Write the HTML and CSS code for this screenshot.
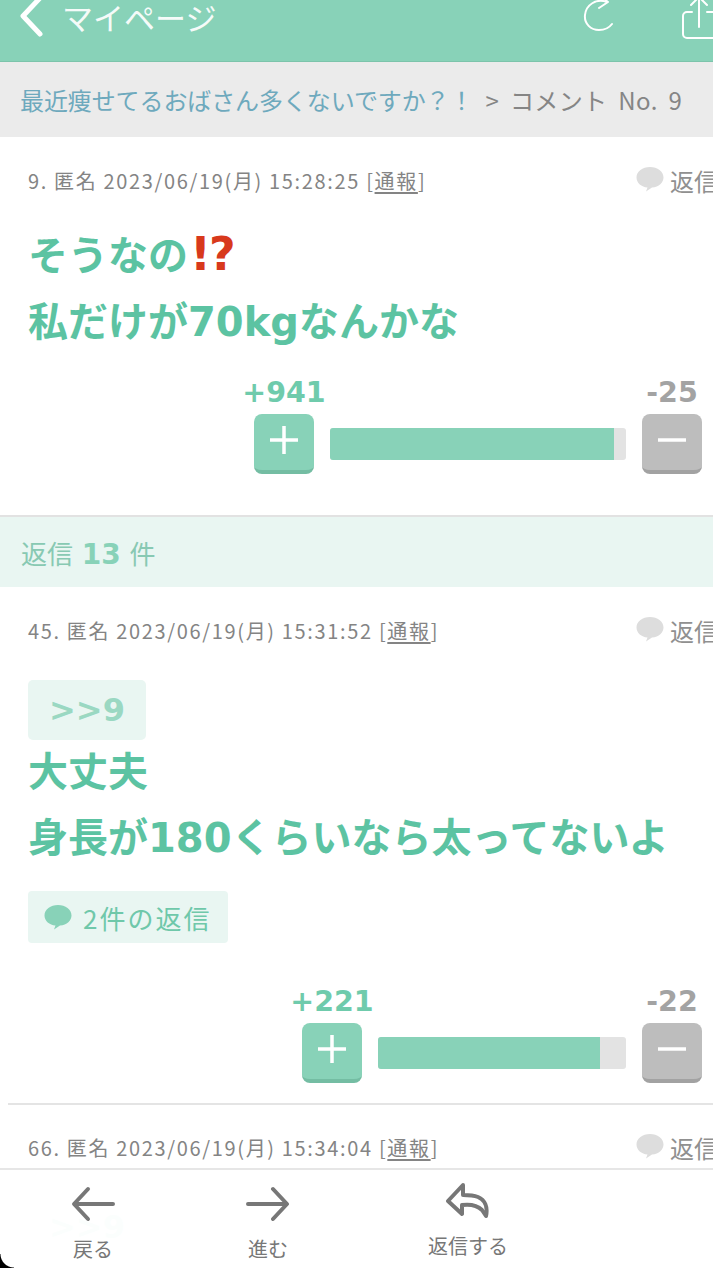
FILE: index.html
```html
<!DOCTYPE html>
<html lang="ja">
<head>
<meta charset="utf-8">
<title>コメント No. 9</title>
<link rel="stylesheet" href="styles.css">
</head>
<body>
<div class="page">
  <header class="topbar">
    <svg class="back" width="28" height="44" viewBox="0 0 28 44"><path d="M24 2 7 20l17 18" fill="none" stroke="#fff" stroke-width="5" stroke-linecap="round" stroke-linejoin="round"/></svg>
    <span class="top-title">マイページ</span>
    <svg class="reload" width="34" height="40" viewBox="0 0 34 40"><path d="M25 7C14 3 4 10 3 20c-1 9 6 15 14 15 5 0 10-2 13-6" fill="none" stroke="#fff" stroke-width="2" stroke-linecap="round"/><path d="M17 0l9 7-9 6" fill="none" stroke="#fff" stroke-width="2" stroke-linecap="round" stroke-linejoin="round"/></svg>
    <svg class="share" width="34" height="46" viewBox="0 0 34 46"><path d="M10 15H5a4 4 0 0 0-4 4v18a4 4 0 0 0 4 4h25a4 4 0 0 0 4-4V19a4 4 0 0 0-4-4h-5M17 30V1M9 8l8-8 8 8" fill="none" stroke="#fff" stroke-width="2" stroke-linecap="round" stroke-linejoin="round"/></svg>
  </header>
  <nav class="crumb"><span class="crumb-link">最近痩せてるおばさん多くないですか？！</span><span class="crumb-now">&gt; コメント No. 9</span></nav>

  <article class="comment first">
    <div class="meta">
      <span>9. 匿名 2023/06/19(月) 15:28:25 [<u>通報</u>]</span>
      <span class="reply-link"><svg class="bubble" width="28" height="26" viewBox="0 0 28 26"><path d="M14 1C6.500 1 .5 5.500.5 11.500c0 5.500 5 9.500 11 10L10 25.500l6-4C23 21 27.500 16.500 27.500 11.500 27.500 5.500 21.500 1 14 1Z" fill="#ddd"/></svg>返信</span>
    </div>
    <div class="body">
      <p>そうなの<span class="emoji">!?</span></p>
      <p>私だけが<span class="latin">70kg</span>なんかな</p>
    </div>
    <div class="vote">
      <div class="vote-col plus"><span class="count">+941</span><span class="btn"><svg width="32" height="32" viewBox="0 0 32 32"><path d="M16 2v28M2 16h28" stroke="#fff" stroke-width="3.500"/></svg></span></div>
      <div class="bar wide"><div class="fill" style="width:96%"></div></div>
      <div class="vote-col minus"><span class="count">-25</span><span class="btn"><svg width="32" height="32" viewBox="0 0 32 32"><path d="M2 16h28" stroke="#fff" stroke-width="3.500"/></svg></span></div>
    </div>
  </article>

  <div class="reply-head">返信 <b>13</b> 件</div>

  <article class="comment second">
    <div class="meta">
      <span>45. 匿名 2023/06/19(月) 15:31:52 [<u>通報</u>]</span>
      <span class="reply-link"><svg class="bubble" width="28" height="26" viewBox="0 0 28 26"><path d="M14 1C6.500 1 .5 5.500.5 11.500c0 5.500 5 9.500 11 10L10 25.500l6-4C23 21 27.500 16.500 27.500 11.500 27.500 5.500 21.500 1 14 1Z" fill="#ddd"/></svg>返信</span>
    </div>
    <div class="body">
      <span class="quote">&gt;&gt;9</span>
      <p>大丈夫</p>
      <p>身長が<span class="latin">180</span>くらいなら太ってないよ</p>
    </div>
    <div class="replies"><svg width="28" height="26" viewBox="0 0 28 26"><path d="M14 1C6.500 1 .5 5.500.5 11.500c0 5.500 5 9.500 11 10L10 25.500l6-4C23 21 27.500 16.500 27.500 11.500 27.500 5.500 21.500 1 14 1Z" fill="#88d2b8"/></svg>2件の返信</div>
    <div class="vote">
      <div class="vote-col plus"><span class="count">+221</span><span class="btn"><svg width="32" height="32" viewBox="0 0 32 32"><path d="M16 2v28M2 16h28" stroke="#fff" stroke-width="3.500"/></svg></span></div>
      <div class="bar narrow"><div class="fill" style="width:89.500%"></div></div>
      <div class="vote-col minus"><span class="count">-22</span><span class="btn"><svg width="32" height="32" viewBox="0 0 32 32"><path d="M2 16h28" stroke="#fff" stroke-width="3.500"/></svg></span></div>
    </div>
  </article>

  <article class="comment third">
    <div class="meta">
      <span>66. 匿名 2023/06/19(月) 15:34:04 [<u>通報</u>]</span>
      <span class="reply-link"><svg class="bubble" width="28" height="26" viewBox="0 0 28 26"><path d="M14 1C6.500 1 .5 5.500.5 11.500c0 5.500 5 9.500 11 10L10 25.500l6-4C23 21 27.500 16.500 27.500 11.500 27.500 5.500 21.500 1 14 1Z" fill="#ddd"/></svg>返信</span>
    </div>
    <div class="body"><span class="quote">&gt;&gt;9</span></div>
  </article>

  <footer class="toolbar">
    <div class="tool t-back"><svg width="44" height="36" viewBox="0 0 44 36"><path d="M42 18H4M17 3 3 18l14 15" fill="none" stroke="#777" stroke-width="4" stroke-linecap="round" stroke-linejoin="round"/></svg><span>戻る</span></div>
    <div class="tool t-next"><svg width="44" height="36" viewBox="0 0 44 36"><path d="M2 18h38M27 3l14 15-14 15" fill="none" stroke="#777" stroke-width="4" stroke-linecap="round" stroke-linejoin="round"/></svg><span>進む</span></div>
    <div class="tool t-reply"><svg width="44" height="36" viewBox="0 0 44 36"><path d="M17 2 2 18l14 13v-9c8-1 15 0 20 5l4 6c2-9-1-16-8-19-5-2-10-2-15-2Z" fill="none" stroke="#777" stroke-width="4" stroke-linejoin="round"/></svg><span>返信する</span></div>
  </footer>
  <div class="corner"></div>
</div>
</body>
</html>
```

FILE: styles.css
```css
* { box-sizing: border-box; }
html, body { margin: 0; padding: 0; background: #fff; }
body { font-family: "Noto Sans CJK JP", "Noto Sans", sans-serif; color: #777; }
.page { position: relative; width: 713px; height: 1268px; overflow: hidden; }
p { margin: 0; }

.topbar { height: 62px; background: #88d2b8; border-bottom: 1px solid #7cc4ab; display: flex; align-items: flex-start; padding-left: 16px; overflow: hidden; }
.back { margin-top: -4px; flex: none; }
.top-title { color: #fff; font-size: 31px; line-height: 34px; margin-left: 18px; flex: 1; opacity: .92; }
.reload { margin-top: -5px; margin-right: 66px; flex: none; }
.share { margin-top: -3px; margin-right: -3px; flex: none; }

.crumb { height: 75px; background: #ebebeb; display: flex; align-items: center; padding-left: 20px; font-size: 24px; gap: 12px; }
.crumb-link { color: #6ea9bd; letter-spacing: -.1px; }
.crumb-now { color: #858585; letter-spacing: .4px; word-spacing: 5px; }

.comment { padding: 0 0 0 28px; }
.first { height: 378px; padding-top: 27px; }
.second { height: 518px; padding-top: 27px; border-bottom: 2px solid #e4e4e4; margin-left: 8px; padding-left: 20px; }
.third { padding-top: 26px; }

.meta { display: flex; justify-content: space-between; align-items: center; height: 32px; font-size: 20px; color: #848484; white-space: nowrap; letter-spacing: 1.650px; }
.meta u { text-underline-offset: 3px; }
.reply-link { display: flex; align-items: center; font-size: 24px; margin-right: -5px; color: #909090; letter-spacing: 0; }
.bubble { margin-right: 6px; margin-top: -2px; }

.body { display: flow-root; color: #5cc3a2; font-size: 40px; font-weight: 700; line-height: 66px; margin-top: 24px; }
.latin { font-family: "DejaVu Sans", sans-serif; line-height: 0; }
.emoji { font-family: "DejaVu Sans", sans-serif; color: #d8391c; font-size: 46px; letter-spacing: -2px; margin-left: 2px; line-height: 0; }
.quote { display: block; width: 118px; height: 60px; margin: 10px 0 -4px; background: #e9f6f2; border-radius: 5px; color: #9ad8c2; font-family: "DejaVu Sans", sans-serif; font-size: 32px; line-height: 60px; text-align: center; }

.replies { display: flex; align-items: center; gap: 11px; width: 200px; height: 52px; margin-top: 23px; padding-left: 16px; background: #e9f6f2; border-radius: 4px; color: #6fc8aa; font-size: 26px; letter-spacing: 2px; }

.vote { display: flex; justify-content: flex-end; align-items: flex-end; gap: 16px; padding-right: 11px; margin-top: 21px; }
.second .vote { margin-top: 39px; }
.vote-col { width: 60px; display: flex; flex-direction: column; align-items: center; }
.count { font-family: "DejaVu Sans", sans-serif; font-weight: 700; font-size: 28.500px; line-height: 40px; white-space: nowrap; margin-bottom: 1px; }
.plus .count { color: #6fcbac; }
.minus .count { color: #a3a3a3; }
.btn { width: 60px; height: 60px; border-radius: 8px; display: flex; align-items: center; justify-content: center; padding-bottom: 4px; }
.plus .btn { background: #88d2b8; border-bottom: 4px solid #74bda3; }
.minus .btn { background: #bdbdbd; border-bottom: 4px solid #a2a2a2; }
.bar { height: 32px; background: #e3e3e3; border-radius: 3px; margin-bottom: 14px; overflow: hidden; }
.wide { width: 296px; }
.narrow { width: 248px; }
.fill { height: 100%; background: #88d2b8; }

.reply-head { height: 72px; background: #e9f6f2; border-top: 2px solid #e2e2e2; padding-left: 21px; font-size: 26px; line-height: 72px; color: #88c9b3; word-spacing: 3px; }
.reply-head b { color: #88d2b8; font-family: "DejaVu Sans", sans-serif; font-size: 28px; }

.toolbar { position: absolute; left: 0; right: 0; bottom: 0; height: 100px; background: rgba(255,255,255,.96); border-top: 2px solid #e6e6e6; }
.tool { position: absolute; display: flex; flex-direction: column; align-items: center; font-size: 20px; color: #777; gap: 13px; line-height: 28px; }
.t-back { left: 53px; width: 80px; top: 16px; }
.t-next { left: 228px; width: 80px; top: 16px; }
.t-reply { left: 408px; width: 120px; top: 13px; }
.corner { position: absolute; left: 0; bottom: 0; width: 14px; height: 14px; background: radial-gradient(circle at 100% 0, transparent 13px, #000 14px); }
```
